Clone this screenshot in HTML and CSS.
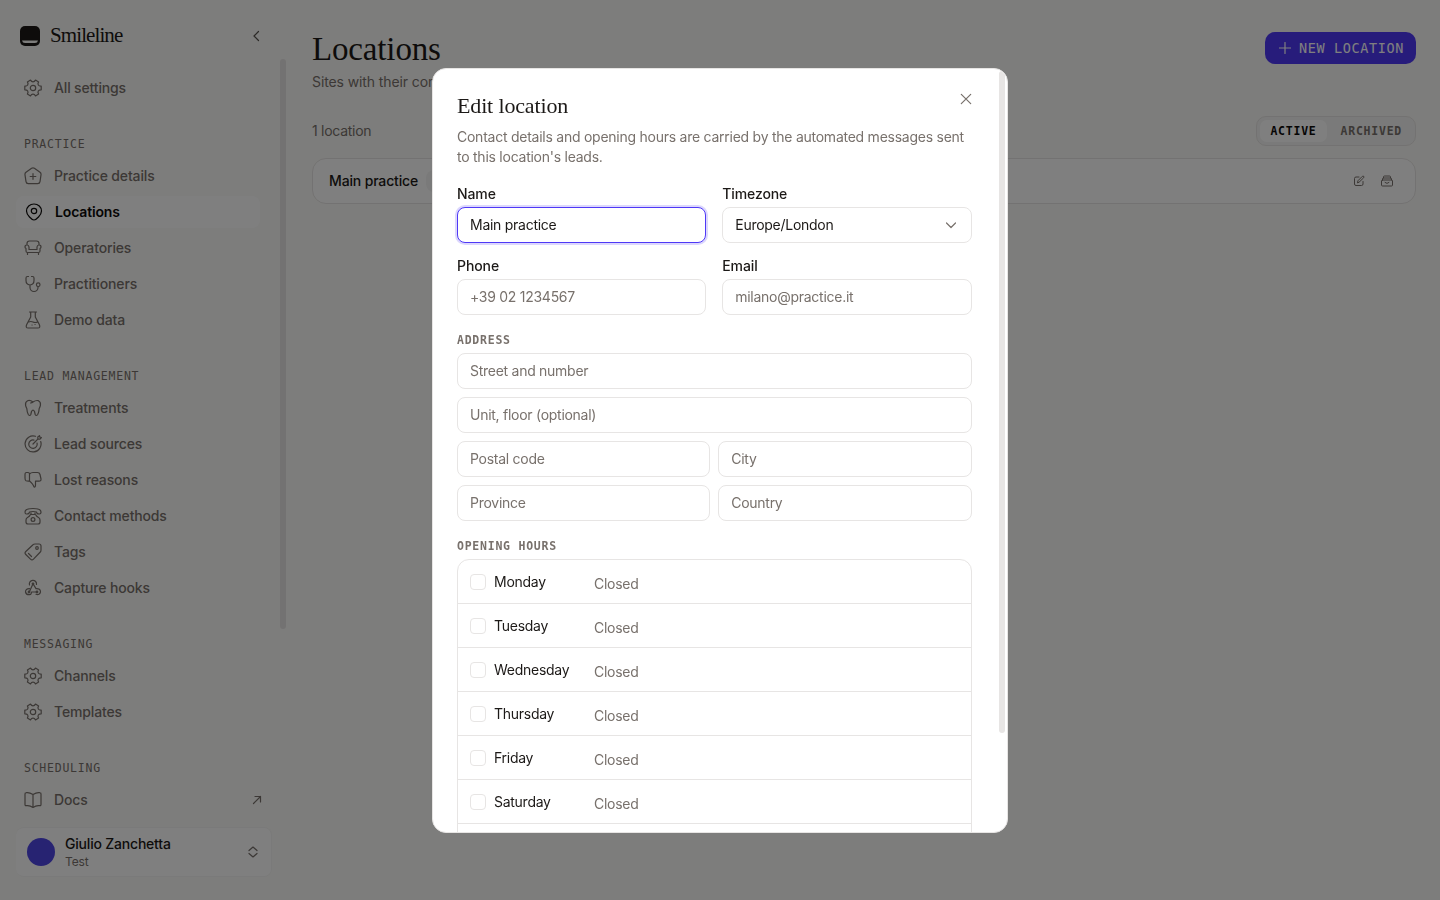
FILE: index.html
```html
<!DOCTYPE html>
<html lang="en">
<head>
  <meta charset="UTF-8">
  <title>Smileline - Locations</title>
  <link rel="stylesheet" href="styles.css">
</head>
<body>
  <!-- icon set -->
  <svg class="sprite" width="0" height="0">
    <symbol id="i-gear" viewBox="0 0 18 18"><circle cx="9" cy="9" r="2.7"/><path d="M6.500 1.100Q7.500 2.900 9 2.900T11.500 1.100L14.600 2.900Q13.500 4.700 14.300 6T17.200 7.200V10.800Q15.100 10.700 14.300 12T14.600 15.100L11.500 16.900Q10.500 15.100 9 15.100T6.500 16.900L3.400 15.100Q4.500 13.300 3.700 12T.8 10.800V7.200Q2.900 7.300 3.700 6T3.400 2.900Z"/></symbol>
    <symbol id="i-home" viewBox="0 0 18 18"><path d="M7.600 1.300Q9 .4 10.400 1.300L16 5.200Q17.300 6.200 17 7.800L16 14.700Q15.700 16.700 13.700 16.700H4.300Q2.300 16.700 2 14.700L1 7.800Q.7 6.200 2 5.200ZM9 6.700V12.300M6.200 9.500H11.800"/></symbol>
    <symbol id="i-pin" viewBox="0 0 18 18"><circle cx="9" cy="8" r="2.700"/><path d="M9 17C7 17 1.500 12 1.500 8A7.500 7 0 0 1 16.500 8C16.500 12 11 17 9 17Z"/></symbol>
    <symbol id="i-sofa" viewBox="0 0 18 18"><path d="M3 6V4.500Q3 2 5.500 2H12.500Q15 2 15 4.500V6M5 9.500V8Q4.800 6 3 6 1 6 1 8 1 9 2 9.500V12Q2 13.500 3.500 13.500H14.500Q16 13.500 16 12V9.500Q17 9 17 8 17 6 15 6 13.200 6 13 8V9.500M5 9V10.500H13V9M3.500 13.500V15.500M14.500 13.500V15.500"/></symbol>
    <symbol id="i-steth" viewBox="0 0 18 18"><path d="M4.500 1.500H3.500Q2 1.500 2 3V5.500Q2 9.500 6 10 10 9.500 10 5.500V3Q10 1.500 8.500 1.500H7.500M6 10V12.500A4 4 0 0 0 14 12.500V11.500"/><circle cx="14.200" cy="9.700" r="1.800"/></symbol>
    <symbol id="i-flask" viewBox="0 0 18 18"><path d="M5.500 1H12.500M6.700 1V6L2.700 13.500Q1.200 17 4.200 17H13.800Q16.800 17 15.300 13.500L11.300 6V1M4.500 11Q7 10 9 11T13.500 11M8 14H8.100M11 13.500H11.100"/></symbol>
    <symbol id="i-tooth" viewBox="0 0 18 18"><path d="M9 3Q6 .8 3.600 1.700 1 3 1.600 6.500 2 8 2.800 9.500 3 13 4.300 15.500 5.800 17.500 6.800 15.500L7.500 12.500Q9 9.700 10.500 12.500L11.200 15.500Q12.200 17.500 13.700 15.500 15 13 15.200 9.500 16 8 16.400 6.500 17 3 14.400 1.700 12 1 9 3 8 3.700 6.600 4"/></symbol>
    <symbol id="i-target" viewBox="0 0 18 18"><path d="M11.500 1.300A8 8 0 1 0 16.700 6.500M10 5.100A4.200 4.200 0 1 0 13 8M9 9L13.800 4.200M13.800 4.200V2L15.500 .6 15.800 2.200 17.400 2.500 16 4.200Z"/></symbol>
    <symbol id="i-down" viewBox="0 0 18 18"><path d="M5.500 10Q4 10.500 2 9.800 1 9.300 1 7V3.500Q1 1.500 2.500 1.500H4Q5.500 1.500 5.500 3ZM5.500 3Q7 1.500 9 1.500H13.500Q15.500 1.500 16 3.500L17 8Q17.200 10.200 15 10.200H11.500V14Q11.500 16.500 10 16 9.500 13.500 5.500 10"/></symbol>
    <symbol id="i-phone" viewBox="0 0 18 18"><path d="M1 5Q1 1.500 9 1.500T17 5Q17 7 15.500 7 12.700 7.200 12.500 5 9 4 5.500 5 5.300 7.200 2.500 7 1 7 1 5M7 7V6M11 7V6M6.500 7.500H11.500Q12.500 9.500 14.500 10.500 16 11.300 16 13V15Q16 17 14 17H4Q2 17 2 15V13Q2 11.300 3.500 10.500 5.500 9.500 6.500 7.500"/><circle cx="9" cy="12.500" r="1.900"/></symbol>
    <symbol id="i-tag" viewBox="0 0 18 18"><path d="M9 1.700Q9.700 1 11 1H15Q17 1 17 3V7Q17 8.300 16.300 9L9.500 16.200Q8 17.700 6.500 16.200L1.800 11.500Q.3 10 1.800 8.500ZM4.500 10.500L7.500 13.500"/><circle cx="13" cy="5" r="1.300"/></symbol>
    <symbol id="i-hook" viewBox="0 0 18 18"><path d="M5.500 6A3.600 3.600 0 1 1 12.500 5.500M9 4.800L12 9.600Q16.500 9.300 16.500 13 15.500 16.500 12 15.300M9 4.800L5.400 12.700M5.500 9.700Q1.500 9.500 1.500 13 2.500 16.500 6.500 15.500 7.300 15 7.500 13H13"/><circle cx="9" cy="4.800" r=".8"/><circle cx="5" cy="13" r=".8"/><circle cx="13" cy="13" r=".8"/></symbol>
    <symbol id="i-book" viewBox="0 0 18 18"><path d="M9 3.500Q5 1 2.200 1.700 1 1.800 1 3V13.500Q1 14.800 2.300 14.700 5.500 14 9 16.500 12.500 14 15.700 14.700 17 14.800 17 13.500V3Q17 1.800 15.800 1.700 13 1 9 3.500V16.500"/></symbol>
  </svg>

  <div class="page">
    <aside class="sidebar">
      <div class="brand">
        <svg class="brand-mark" width="20" height="20" viewBox="0 0 20 20"><rect width="20" height="20" rx="5"/><path d="M2 14.500H18Q17.500 17 15 17H5Q2.500 17 2 14.500Z"/></svg>
        <span class="brand-name">Smileline</span>
        <svg class="icon collapse" width="14" height="14" viewBox="0 0 14 14"><path d="M9.500 2.500L5 7L9.500 11.500"/></svg>
      </div>

      <nav class="nav">
        <a class="nav-item"><svg class="icon"><use href="#i-gear"/></svg>All settings</a>
        <h4 class="nav-title">Practice</h4>
        <a class="nav-item"><svg class="icon"><use href="#i-home"/></svg>Practice details</a>
        <a class="nav-item active"><svg class="icon"><use href="#i-pin"/></svg>Locations</a>
        <a class="nav-item"><svg class="icon"><use href="#i-sofa"/></svg>Operatories</a>
        <a class="nav-item"><svg class="icon"><use href="#i-steth"/></svg>Practitioners</a>
        <a class="nav-item"><svg class="icon"><use href="#i-flask"/></svg>Demo data</a>
        <h4 class="nav-title">Lead management</h4>
        <a class="nav-item"><svg class="icon"><use href="#i-tooth"/></svg>Treatments</a>
        <a class="nav-item"><svg class="icon"><use href="#i-target"/></svg>Lead sources</a>
        <a class="nav-item"><svg class="icon"><use href="#i-down"/></svg>Lost reasons</a>
        <a class="nav-item"><svg class="icon"><use href="#i-phone"/></svg>Contact methods</a>
        <a class="nav-item"><svg class="icon"><use href="#i-tag"/></svg>Tags</a>
        <a class="nav-item"><svg class="icon"><use href="#i-hook"/></svg>Capture hooks</a>
        <h4 class="nav-title">Messaging</h4>
        <a class="nav-item"><svg class="icon"><use href="#i-gear"/></svg>Channels</a>
        <a class="nav-item"><svg class="icon"><use href="#i-gear"/></svg>Templates</a>
        <h4 class="nav-title">Scheduling</h4>
      </nav>
      <div class="nav-scroll"></div>

      <a class="nav-item docs"><svg class="icon"><use href="#i-book"/></svg>Docs
        <svg class="external" width="10" height="10" viewBox="0 0 10 10"><path d="M1.500 8.500L8.500 1.500M3 1.500H8.500V7"/></svg>
      </a>

      <div class="user">
        <span class="avatar"></span>
        <div class="user-text">
          <div class="user-name">Giulio Zanchetta</div>
          <div class="user-team">Test</div>
        </div>
        <svg class="icon updown" width="12" height="12" viewBox="0 0 12 12"><path d="M2 4.500L6 1L10 4.500M2 7.500L6 11L10 7.500"/></svg>
      </div>
    </aside>

    <main class="main">
      <div class="main-head">
        <div>
          <h1>Locations</h1>
          <p class="subtitle">Sites with their contact details and opening hours.</p>
        </div>
        <button class="new-btn"><svg width="12" height="12" viewBox="0 0 12 12"><path d="M6 .5V11.500M.5 6H11.500"/></svg>NEW LOCATION</button>
      </div>
      <div class="toolbar">
        <span class="count">1 location</span>
        <div class="tabs"><span class="tab selected">ACTIVE</span><span class="tab">ARCHIVED</span></div>
      </div>
      <div class="location-row">
        <span class="location-name">Main practice</span>
        <span class="zone"></span>
        <div class="row-actions">
          <svg width="12" height="12" viewBox="0 0 12 12"><path d="M6 2H3Q1.500 2 1.500 3.500V9Q1.500 10.500 3 10.500H8.500Q10 10.500 10 9V6.500M4.500 7.500L5 5.700 9.300 1.400Q10 .7 10.800 1.400 11.300 2 10.600 2.800L6.300 7Z"/></svg>
          <svg width="12" height="12" viewBox="0 0 12 12"><path d="M2.500 3V2Q2.500 1 3.500 1H8.500Q9.500 1 9.500 2V3M1.500 5V4Q1.500 3 2.500 3H9.500Q10.500 3 10.500 4V5M1.500 5H10.500Q11.500 5 11.500 6V10Q11.500 11 10.500 11H1.500Q.5 11 .5 10V6Q.5 5 1.500 5ZM4 7.500Q6 9.500 8 7.500"/></svg>
        </div>
      </div>
    </main>
  </div>

  <div class="overlay">
    <div class="modal">
      <svg class="close" width="12" height="12" viewBox="0 0 12 12"><path d="M1.300 1.300L10.700 10.700M10.700 1.300L1.300 10.700"/></svg>
      <div class="modal-scroll"></div>
      <div class="modal-body">
        <h2>Edit location</h2>
        <p class="modal-text">Contact details and opening hours are carried by the automated messages sent to this location's leads.</p>

        <div class="fields">
          <div class="field">
            <label>Name</label>
            <div class="input focused">Main practice</div>
          </div>
          <div class="field">
            <label>Timezone</label>
            <div class="input filled">Europe/London<svg width="12" height="12" viewBox="0 0 12 12"><path d="M1.500 4L6 8.500L10.500 4"/></svg></div>
          </div>
          <div class="field">
            <label>Phone</label>
            <div class="input">+39 02 1234567</div>
          </div>
          <div class="field">
            <label>Email</label>
            <div class="input">milano@practice.it</div>
          </div>
        </div>

        <h3>Address</h3>
        <div class="address">
          <div class="input wide">Street and number</div>
          <div class="input wide">Unit, floor (optional)</div>
          <div class="input">Postal code</div>
          <div class="input">City</div>
          <div class="input">Province</div>
          <div class="input">Country</div>
        </div>

        <h3>Opening hours</h3>
        <div class="hours">
          <div class="day"><span class="check"></span><span class="day-name">Monday</span><span class="closed">Closed</span></div>
          <div class="day"><span class="check"></span><span class="day-name">Tuesday</span><span class="closed">Closed</span></div>
          <div class="day"><span class="check"></span><span class="day-name">Wednesday</span><span class="closed">Closed</span></div>
          <div class="day"><span class="check"></span><span class="day-name">Thursday</span><span class="closed">Closed</span></div>
          <div class="day"><span class="check"></span><span class="day-name">Friday</span><span class="closed">Closed</span></div>
          <div class="day"><span class="check"></span><span class="day-name">Saturday</span><span class="closed">Closed</span></div>
          <div class="day"></div>
        </div>
      </div>
    </div>
  </div>
</body>
</html>
```
FILE: styles.css
```css
* {
  margin: 0;
  padding: 0;
  box-sizing: border-box;
}

body {
  font-family: Inter, sans-serif;
  font-size: 14px;
  line-height: 20px;
  letter-spacing: -0.27px;
  color: #1c1917;
  background-color: #fbfbf8;
  height: 100vh;
  overflow: hidden;
}

svg {
  fill: none;
  stroke: currentColor;
  stroke-width: 1.2;
  stroke-linecap: round;
  stroke-linejoin: round;
  flex-shrink: 0;
}

.sprite {
  position: absolute;
}

.page {
  display: flex;
  height: 900px;
}

/* sidebar */
.sidebar {
  position: relative;
  width: 288px;
  padding: 16px;
  display: flex;
  flex-direction: column;
}

.brand {
  display: flex;
  align-items: center;
  height: 40px;
  padding: 0 9px 0 4px;
  margin-bottom: 14px;
}

.brand-mark rect {
  fill: #1c1917;
  stroke: none;
}

.brand-mark path {
  fill: #fbfbf8;
  stroke: none;
}

.brand-name {
  margin-left: 10px;
  padding-bottom: 3px;
  font-family: "Liberation Serif", serif;
  font-size: 21px;
  letter-spacing: -0.9px;
}

.collapse {
  margin-left: auto;
  color: #57534e;
}

.nav {
  height: 712px;
  overflow: hidden;
}

.nav-item {
  display: flex;
  align-items: center;
  height: 36px;
  padding: 0 8px;
  gap: 12px;
  font-weight: 500;
  letter-spacing: -0.15px;
  color: #78716c;
}

.nav-item .icon {
  width: 18px;
  height: 18px;
}

.nav-item.active {
  width: 244px;
  height: 32px;
  margin: 2px 0;
  padding-left: 9px;
  border-radius: 8px;
  background-color: #fff;
  color: #0c0a09;
  font-weight: 600;
}

.nav-title {
  margin-top: 28px;
  padding: 0 8px;
  height: 24px;
  font-family: "DejaVu Sans Mono", monospace;
  font-size: 11.5px;
  line-height: 20px;
  font-weight: 400;
  letter-spacing: 0.76px;
  text-transform: uppercase;
  color: #78716c;
}

.nav-scroll {
  position: absolute;
  left: 280px;
  top: 59px;
  width: 6px;
  height: 570px;
  border-radius: 3px;
  background-color: #e7e5e4;
}

.external {
  margin-left: auto;
  margin-right: 2px;
}

.user {
  display: flex;
  align-items: center;
  height: 50px;
  width: 256px;
  margin-top: 9px;
  padding: 0 12px 0 11px;
  border: 1px solid #f5f5f4;
  border-left-width: 0;
  border-radius: 8px;
  background-color: #fff;
}

.avatar {
  width: 28px;
  height: 28px;
  border-radius: 50%;
  background-color: #4f46e5;
  margin-right: 10px;
}

.user-name {
  font-weight: 500;
  line-height: 18px;
  letter-spacing: -0.2px;
}

.user-team {
  padding-top: 1px;
  font-size: 12px;
  line-height: 15px;
  letter-spacing: -0.1px;
  color: #78716c;
}

.updown {
  margin-left: auto;
  color: #78716c;
}

/* main column */
.main {
  flex: 1;
  padding: 32px 24px;
}

.main-head {
  display: flex;
  justify-content: space-between;
  align-items: flex-start;
}

h1 {
  font-family: "Liberation Serif", serif;
  font-size: 33px;
  line-height: 34px;
  font-weight: 400;
  letter-spacing: -0.15px;
}

.subtitle {
  margin-top: 6px;
  letter-spacing: -0.1px;
  color: #78716c;
}

.new-btn {
  display: flex;
  align-items: center;
  gap: 8px;
  height: 32px;
  padding: 0 12px 0 14px;
  border: none;
  border-radius: 10px;
  background-color: #4f39f6;
  color: #fff;
  font-family: "DejaVu Sans Mono", monospace;
  font-size: 13.5px;
  letter-spacing: 0.63px;
}

.toolbar {
  display: flex;
  justify-content: space-between;
  align-items: center;
  height: 30px;
  margin: 24px 0 12px;
  color: #78716c;
}

.tabs {
  display: flex;
  gap: 4px;
  height: 30px;
  padding: 3px;
  border: 1px solid #e7e5e4;
  border-radius: 10px;
  background-color: #f5f5f4;
}

.tab {
  padding: 0 10px;
  font-family: "DejaVu Sans Mono", monospace;
  font-size: 11.5px;
  line-height: 22px;
  font-weight: 700;
  letter-spacing: 0.76px;
}

.tab.selected {
  border-radius: 7px;
  background-color: #fff;
  color: #0c0a09;
}

.location-row {
  display: flex;
  align-items: center;
  height: 46px;
  padding: 0 22px 0 16px;
  border: 1px solid #e7e5e4;
  border-radius: 14px;
  background-color: #fff;
}

.location-name {
  font-weight: 500;
  letter-spacing: -0.15px;
}

.zone {
  width: 90px;
  height: 22px;
  margin-left: 8px;
  border-radius: 8px;
  background-color: #f5f5f4;
}

.row-actions {
  display: flex;
  gap: 16px;
  margin-left: auto;
  color: #78716c;
}

.row-actions svg {
  stroke-width: 1;
}

/* dialog */
.overlay {
  position: fixed;
  inset: 0;
  display: flex;
  align-items: center;
  justify-content: center;
  background-color: rgba(0, 0, 0, 0.5);
}

.modal {
  position: relative;
  width: 576px;
  height: 765px;
  border: 1px solid #e7e5e4;
  border-radius: 14px;
  background-color: #fff;
  overflow: hidden;
}

.modal-body {
  padding: 23px 35.5px 24px 24px;
}

.close {
  position: absolute;
  top: 24px;
  right: 35px;
  color: #78716c;
}

.modal-scroll {
  position: absolute;
  top: 2px;
  right: 2px;
  width: 6px;
  height: 662px;
  border-radius: 3px;
  background-color: #e7e5e4;
}

h2 {
  font-family: "Liberation Serif", serif;
  font-size: 22px;
  line-height: 28px;
  font-weight: 400;
  letter-spacing: -0.15px;
}

.modal-text {
  margin-top: 7px;
  letter-spacing: -0.25px;
  color: #78716c;
}

.fields {
  display: grid;
  grid-template-columns: 1fr 1fr;
  gap: 16px;
  margin-top: 20px;
}

.field label {
  display: block;
  height: 20px;
  line-height: 14px;
  font-weight: 500;
  letter-spacing: -0.1px;
}

.input {
  display: flex;
  align-items: center;
  justify-content: space-between;
  height: 36px;
  padding: 0 14px 0 12px;
  border: 1px solid #e7e5e4;
  border-radius: 8px;
  background-color: #fff;
  color: #78716c;
}

.input.filled {
  color: #1c1917;
}

.input svg {
  color: #78716c;
}

.input.focused {
  color: #1c1917;
  border-color: #4f39f6;
  box-shadow: 0 0 0 2px #dcd7fd;
}

h3 {
  height: 20px;
  margin: 15px 0 3px;
  font-family: "DejaVu Sans Mono", monospace;
  font-size: 11.5px;
  line-height: 20px;
  letter-spacing: 0.76px;
  text-transform: uppercase;
  color: #78716c;
}

.address {
  display: grid;
  grid-template-columns: 1fr 1fr;
  gap: 8px;
}

.wide {
  grid-column: span 2;
}

.hours {
  border: 1px solid #e7e5e4;
  border-radius: 12px;
}

.day {
  display: flex;
  align-items: center;
  height: 44px;
  padding: 2px 12px 0;
  border-bottom: 1px solid #e7e5e4;
}

.day:last-child {
  border-bottom: none;
}

.check {
  width: 16px;
  height: 16px;
  border: 1px solid #e7e5e4;
  border-radius: 4px;
}

.day-name {
  width: 92px;
  margin-left: 8px;
}

.closed {
  margin-left: 8px;
  padding-top: 4px;
  color: #78716c;
}
```
